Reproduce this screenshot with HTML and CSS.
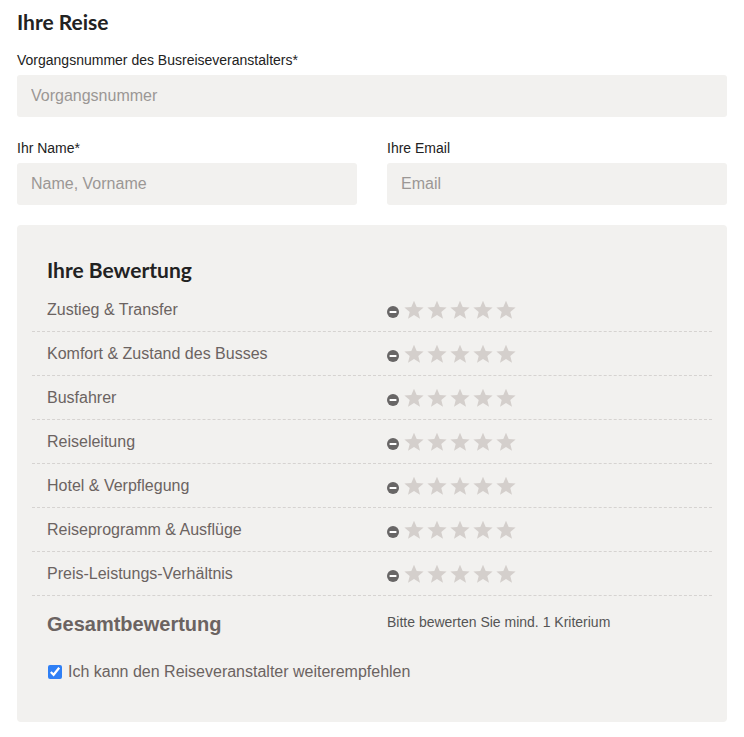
FILE: index.html
```html
<!DOCTYPE html>
<html lang="de">
<head>
    <meta charset="UTF-8">
    <meta name="viewport" content="width=device-width, initial-scale=1.0">
    <title>Ihre Reise</title>
    <link rel="stylesheet" href="styles.css">
</head>
<body>

<svg width="0" height="0" class="defs">
    <defs>
        <symbol id="star" viewBox="0 0 20 20">
            <polygon points="10,0.8 12.7,7 19.6,7.4 14.3,11.9 16,18.8 10,15.1 4,18.8 5.7,11.9 0.4,7.4 7.3,7"/>
        </symbol>
        <symbol id="reset" viewBox="0 0 12 12">
            <circle cx="6" cy="6" r="6" fill="#686666"/>
            <rect x="2.6" y="5" width="6.8" height="2" fill="#fff"/>
        </symbol>
    </defs>
</svg>

<div class="page">
    <h1>Ihre Reise</h1>

    <div class="field">
        <label for="booking">Vorgangsnummer des Busreiseveranstalters*</label>
        <input type="text" id="booking" placeholder="Vorgangsnummer">
    </div>

    <div class="field-row">
        <div class="field">
            <label for="name">Ihr Name*</label>
            <input type="text" id="name" placeholder="Name, Vorname">
        </div>
        <div class="field">
            <label for="email">Ihre Email</label>
            <input type="email" id="email" placeholder="Email">
        </div>
    </div>

    <div class="rating-box">
        <h2>Ihre Bewertung</h2>

        <div class="rating-list" id="ratingList">
            <!-- rows are filled in below -->
        </div>

        <div class="overall">
            <div class="overall-title">Gesamtbewertung</div>
            <div class="overall-hint">Bitte bewerten Sie mind. 1 Kriterium</div>
        </div>

        <label class="recommend">
            <input type="checkbox" checked>
            Ich kann den Reiseveranstalter weiterempfehlen
        </label>
    </div>
</div>

<script>
    const criteria = [
        'Zustieg & Transfer',
        'Komfort & Zustand des Busses',
        'Busfahrer',
        'Reiseleitung',
        'Hotel & Verpflegung',
        'Reiseprogramm & Ausflüge',
        'Preis-Leistungs-Verhältnis'
    ];

    const list = document.getElementById('ratingList');

    criteria.forEach((name) => {
        let stars = '';
        for (let i = 0; i < 5; i++) {
            stars += '<svg class="star"><use href="#star"></use></svg>';
        }
        const row = document.createElement('div');
        row.className = 'rating-row';
        row.innerHTML = `
            <span class="rating-name">${name.replace('&', '&amp;')}</span>
            <span class="stars">
                <svg class="reset"><use href="#reset"></use></svg>${stars}
            </span>
        `;
        list.appendChild(row);
    });
</script>

</body>
</html>
```

FILE: styles.css
```css
body {
    margin: 0;
    font-family: "Liberation Sans", Arial, sans-serif;
    color: #222;
    background: #fff;
}
.defs {
    position: absolute;
}
.page {
    padding: 10px 17px 15px;
}
h1 {
    font-family: Lato, "Open Sans", sans-serif;
    font-weight: bold;
    font-size: 21px;
    line-height: 24px;
    margin: 0 0 17px;
    color: #222;
}
.field label {
    display: block;
    font-size: 14px;
    line-height: 18px;
    margin-bottom: 6px;
}
.field input {
    display: block;
    box-sizing: border-box;
    width: 100%;
    height: 42px;
    border: none;
    border-radius: 3px;
    background: #f2f1ef;
    padding: 0 14px;
    font-family: inherit;
    font-size: 16px;
    color: #333;
}
.field input::placeholder {
    color: #9b9795;
}
.field-row {
    display: grid;
    grid-template-columns: 1fr 1fr;
    gap: 30px;
    margin-top: 22px;
}
.rating-box {
    margin-top: 20px;
    background: #f2f1ef;
    border-radius: 4px;
    padding: 33px 15px 40px;
}
h2 {
    font-family: Lato, "Open Sans", sans-serif;
    font-weight: bold;
    font-size: 21px;
    line-height: 24px;
    margin: 0 15px 6px;
    color: #222;
}
.rating-row {
    display: grid;
    grid-template-columns: 355px 1fr;
    align-items: center;
    height: 44px;
    box-sizing: border-box;
    border-bottom: 1px dashed #d6d3d1;
    padding-top: 1px;
}
.rating-name {
    padding-left: 15px;
    font-size: 16px;
    color: #6b6361;
}
.stars {
    display: flex;
    align-items: center;
    gap: 3px;
}
.reset {
    width: 12px;
    height: 12px;
    margin-top: 4px;
    margin-right: 2px;
}
.star {
    width: 20px;
    height: 20px;
    fill: #d4cfcc;
}
.overall {
    display: grid;
    grid-template-columns: 355px 1fr;
    padding-top: 16px;
}
.overall-title {
    padding-left: 15px;
    font-size: 20px;
    line-height: 24px;
    font-weight: bold;
    color: #6b6361;
}
.overall-hint {
    font-size: 14px;
    line-height: 20px;
    color: #555;
}
.recommend {
    display: flex;
    align-items: center;
    gap: 6px;
    margin-top: 26px;
    padding-left: 16px;
    font-size: 16px;
    line-height: 20px;
    color: #6b6361;
}
.recommend input {
    margin: 0;
    width: 14px;
    height: 14px;
    accent-color: #2f7ff5;
}
```
